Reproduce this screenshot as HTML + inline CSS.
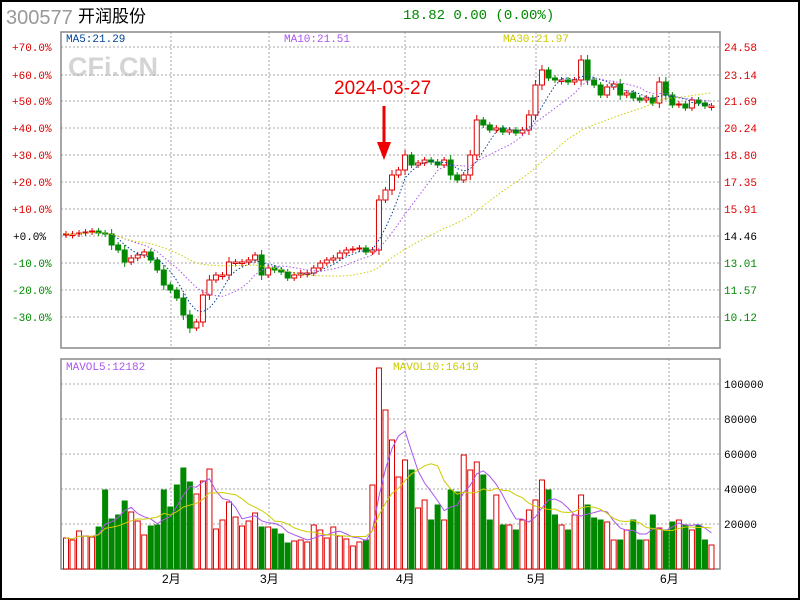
<!DOCTYPE html>
<html><head><meta charset="utf-8"><style>
html,body{margin:0;padding:0;background:#fff}
#w{position:relative;width:796px;height:596px;border:2px solid #000;overflow:hidden;font-family:"Liberation Mono",monospace}
svg{position:absolute;left:-2px;top:-2px}
</style></head><body><div id="w">
<svg id="s" width="800" height="600" xmlns="http://www.w3.org/2000/svg" font-family="Liberation Mono, monospace">
<text x="6" y="24" font-family="Liberation Sans, sans-serif" font-size="20" fill="#999">300577</text>
<text x="78" y="22" font-family="Liberation Sans, Noto Sans CJK SC, sans-serif" font-size="17" fill="#000">开润股份</text>
<text x="403" y="19" font-size="14" fill="#008800">18.82 0.00 (0.00%)</text>
<text x="68" y="76" font-family="Liberation Sans, sans-serif" font-weight="bold" font-size="27" fill="#d4d4d4">CFi.CN</text>
<g id="grid"></g>
<rect x="61" y="32" width="659" height="316" fill="none" stroke="#888" stroke-width="1.5"/>
<rect x="61" y="359" width="659" height="210" fill="none" stroke="#888" stroke-width="1.5"/>
<text x="66" y="42" font-size="11" fill="#004499">MA5:21.29</text>
<text x="284" y="42" font-size="11" fill="#aa55ee">MA10:21.51</text>
<text x="503" y="42" font-size="11" fill="#cccc00">MA30:21.97</text>
<text x="66" y="370" font-size="11" fill="#aa55ee">MAVOL5:12182</text>
<text x="393" y="370" font-size="11" fill="#cccc00">MAVOL10:16419</text>
<g id="c"></g>
<text x="334" y="94" font-family="Liberation Sans, sans-serif" font-size="19" fill="#ee0000">2024-03-27</text>
<line x1="384" y1="106" x2="384" y2="148" stroke="#ee0000" stroke-width="3"/>
<polygon points="377,142 391,142 384,160" fill="#ee0000"/>
</svg></div>
<script>
var s=document.getElementById('c'),g=document.getElementById('grid'),S='';
var G='';
[47,75,101,128,155,182,209,236,263,290,317].forEach(function(y,i){G+='<line x1="61" x2="720" y1="'+y+'" y2="'+y+'" stroke="#aaa" stroke-dasharray="2,2"/>';
var p=['+70.0%','+60.0%','+50.0%','+40.0%','+30.0%','+20.0%','+10.0%','+0.0%','-10.0%','-20.0%','-30.0%'][i];
var r=['24.58','23.14','21.69','20.24','18.80','17.35','15.91','14.46','13.01','11.57','10.12'][i];
var c=i<7?'#dd0000':(i==7?'#000':'#008800');
G+='<text x="'+(i==7?13:12)+'" y="'+(y+4)+'" font-size="11" fill="'+c+'">'+p+'</text><text x="724" y="'+(y+4)+'" font-size="11" fill="'+c+'">'+r+'</text>';});
[384,419,454,489,524].forEach(function(y,i){G+='<line x1="61" x2="720" y1="'+y+'" y2="'+y+'" stroke="#aaa" stroke-dasharray="2,2"/><text x="724" y="'+(y+4)+'" font-size="11" fill="#000">'+['100000','80000','60000','40000','20000'][i]+'</text>';});
[[171,'2月'],[269,'3月'],[405,'4月'],[536,'5月'],[669,'6月']].forEach(function(a){G+='<line x1="'+a[0]+'" x2="'+a[0]+'" y1="32" y2="348" stroke="#aaa" stroke-dasharray="2,2"/><line x1="'+a[0]+'" x2="'+a[0]+'" y1="359" y2="569" stroke="#aaa" stroke-dasharray="2,2"/><text x="'+(a[0]-9)+'" y="583" font-size="12" font-family="Liberation Sans, Noto Sans CJK SC, sans-serif" fill="#000">'+a[1]+'</text>';});
g.innerHTML=G;
var C=[234,234,233,232,231,233,234,245,250,262,258,255,252,260,270,285,290,298,315,328,322,295,280,275,275,262,262,262,260,255,275,268,270,272,278,275,273,273,268,263,260,258,253,250,249,248,252,250,200,190,175,170,155,165,163,160,162,165,160,175,180,175,155,120,125,130,128,132,130,133,130,115,85,70,78,80,80,82,80,60,80,85,95,87,84,95,93,98,100,98,103,82,95,105,104,108,100,103,106,106];
var V=[538,540,531,536,537,527,490,519,515,501,512,521,535,526,525,490,507,485,468,482,494,481,469,529,520,502,517,526,521,513,527,527,529,534,543,541,540,542,525,530,538,527,536,539,546,542,540,485,368,410,440,477,460,470,508,500,520,505,520,490,492,455,470,462,475,520,495,525,525,530,520,510,500,480,490,515,525,530,515,495,505,518,520,522,540,540,530,520,540,540,515,528,530,522,520,525,530,525,540,545,545];
var n=C.length,x0=66,dx=6.52;
function X(i){return x0+i*dx}
for(var i=0;i<n;i++){var o=i?C[i-1]:C[0]+1,c=C[i];if(Math.abs(o-c)<1)o=c+1.5;
var up=c<o,col=up?'#dd0000':'#008800',x=X(i),t=Math.min(o,c),b=Math.max(o,c);
var hw=(b-t)>10?5:3;
S+='<line x1="'+x+'" x2="'+x+'" y1="'+(t-hw)+'" y2="'+(b+hw)+'" stroke="'+col+'"/>';
S+='<rect x="'+(x-2.5)+'" y="'+t+'" width="5" height="'+(b-t)+'" fill="'+(up?'#fff':col)+'" stroke="'+col+'"/>';
var v=V[i]||540;
S+='<rect x="'+(x-2.5)+'" y="'+v+'" width="5" height="'+(569-v)+'" fill="'+(up?'#fff':col)+'" stroke="'+col+'"/>';}
function ma(a,k,dash,col){var p='';for(var i=0;i<n;i++){var st=Math.max(0,i-k+1),sm=0;for(var j=st;j<=i;j++)sm+=a[j];p+=(i?'L':'M')+X(i).toFixed(1)+','+(sm/(i-st+1)).toFixed(1);}
return '<path d="'+p+'" fill="none" stroke="'+col+'" stroke-width="1"'+(dash?' stroke-dasharray="1.5,2"':'')+'/>';}
S+=ma(C,5,1,'#004499')+ma(C,10,1,'#aa55ee')+ma(C,30,1,'#cccc00');
S+=ma(V,5,0,'#aa55ee')+ma(V,10,0,'#cccc00');
s.innerHTML=S;
</script></body></html>
